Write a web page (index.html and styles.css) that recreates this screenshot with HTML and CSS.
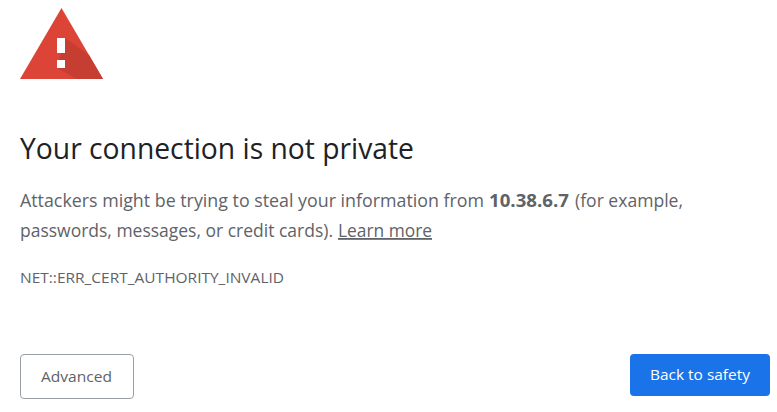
FILE: index.html
```html
<!DOCTYPE html>
<html lang="en">
<head>
<meta charset="utf-8">
<title>Privacy error</title>
<link rel="stylesheet" href="styles.css">
</head>
<body>
<main class="page">
<svg class="warning" width="84" height="72" viewBox="0 0 84 72" aria-hidden="true">
<path d="M41.5 0 83 71H0Z" fill="#db4437"/>
<path d="M45 30 69 47 83 71H57L37 60Z" fill="#c63d32"/>
<path d="M37 30h8v15h-8zM37 52h8v8h-8z" fill="#fff"/>
</svg>
<h1 class="title"><svg class="line" width="394" height="40"><text x="0" y="26" textLength="394" lengthAdjust="spacingAndGlyphs">Your connection is not private</text></svg></h1>
<p class="message">
<svg class="line" width="664" height="30"><text x="0" y="21" textLength="464" lengthAdjust="spacingAndGlyphs">Attackers might be trying to steal your information from</text><text class="host" x="469" y="21" textLength="80" lengthAdjust="spacingAndGlyphs">10.38.6.7</text><text x="555" y="21" textLength="108" lengthAdjust="spacingAndGlyphs">(for example,</text></svg>
<svg class="line" width="664" height="30"><text x="0" y="21" textLength="313" lengthAdjust="spacingAndGlyphs">passwords, messages, or credit cards).</text><text class="link" x="318" y="21" textLength="94" lengthAdjust="spacingAndGlyphs">Learn more</text></svg>
</p>
<div class="code"><svg class="line" width="265" height="24"><text x="0" y="17" textLength="264" lengthAdjust="spacingAndGlyphs">NET::ERR_CERT_AUTHORITY_INVALID</text></svg></div>
<div class="actions">
<button class="button advanced"><svg class="line" width="72" height="24"><text x="0" y="17" textLength="71" lengthAdjust="spacingAndGlyphs">Advanced</text></svg></button>
<button class="button primary"><svg class="line" width="100" height="24"><text x="0" y="17" textLength="100" lengthAdjust="spacingAndGlyphs">Back to safety</text></svg></button>
</div>
</main>
</body>
</html>
```
FILE: styles.css
```css
body{margin:0;background:#fff;font-family:"Open Sans",sans-serif;color:#5f6368}
.page{padding:8px 7px 0 20px}
.warning{display:block}
.line{display:block;overflow:visible;fill:currentColor}
.title{margin:53px 0 0;font-size:29px;font-weight:400;color:#202124}
.message{margin:13px 0 0;font-size:18px}
.host{font-weight:700}
.link{text-decoration:underline}
.code{margin-top:20px;font-size:15px}
.actions{display:flex;justify-content:space-between;align-items:flex-start;margin-top:64px}
.button{box-sizing:border-box;border-radius:4px;font:15px "Open Sans",sans-serif;padding:0 20px}
.advanced{width:114px;height:45px;border:1px solid #9aa0a6;background:#fff;color:#5f6368}
.primary{width:140px;height:42px;border:0;background:#1a73e8;color:#fff}
```
